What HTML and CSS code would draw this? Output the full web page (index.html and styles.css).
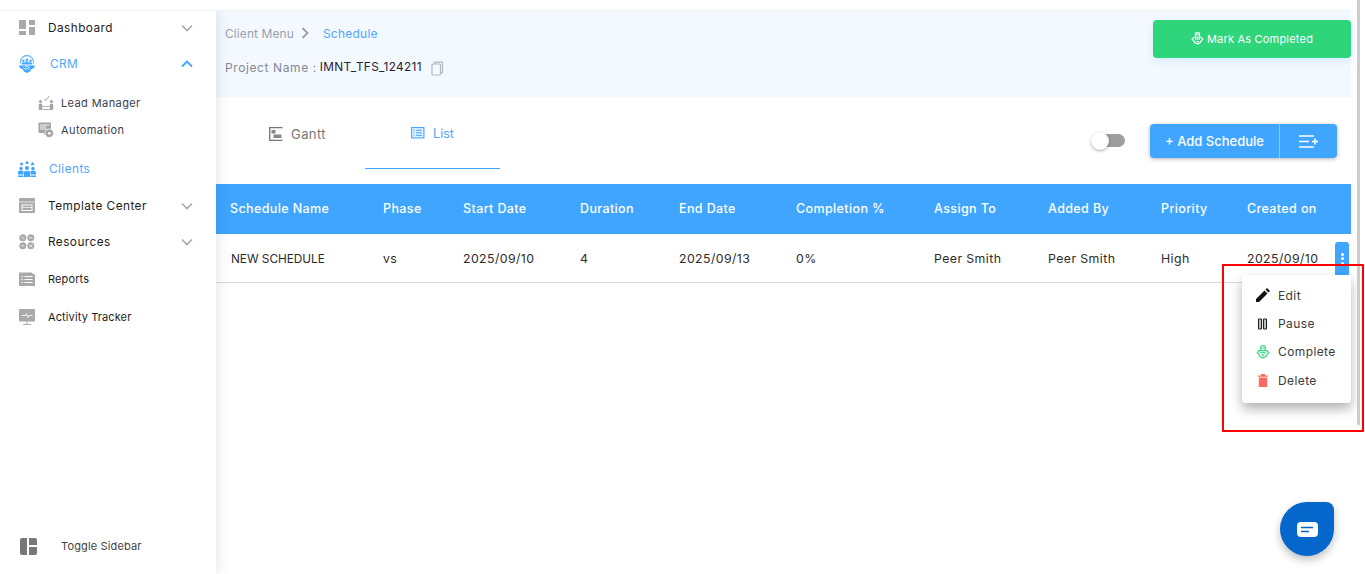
FILE: index.html
```html
<!DOCTYPE html>
<html lang="en">
<head>
<meta charset="utf-8">
<title>Schedule</title>
<link rel="stylesheet" href="styles.css">
</head>
<body>
<div class="topstrip"></div>
<div class="shell">
  <aside class="sidebar">
    <nav class="nav">
      <a class="item item-dashboard">
        <svg class="ico" viewBox="0 0 18 18"><g fill="#a9a9a9"><rect x="1" y="1" width="7" height="9"/><rect x="11" y="1" width="6" height="5"/><rect x="1" y="12" width="7" height="4"/><rect x="11" y="8" width="6" height="8"/></g></svg>
        <span class="label">Dashboard</span>
        <svg class="chev" viewBox="0 0 12 8"><path d="M1 1.500l5 5 5-5" fill="none" stroke="#a8a8a8" stroke-width="1.600"/></svg>
      </a>
      <a class="item item-crm active">
        <svg class="ico ico-crm" viewBox="0 0 20 20"><path d="M3.500 9.500V8a6.500 6.500 0 0 1 13 0v1.500" fill="none" stroke="#6dbbff" stroke-width="1.300"/><g fill="#3fa5ff"><circle cx="6.500" cy="6.800" r="1.200"/><circle cx="10" cy="5.800" r="1.200"/><circle cx="13.500" cy="6.800" r="1.200"/><path d="M4.800 10.500V9.300q.2-1 1.700-1t1.700 1v1.200zM8.300 10.500V8.300q.2-1 1.700-1t1.700 1v2.200zM11.800 10.500V9.300q.2-1 1.700-1t1.700 1v1.200z"/><path d="M2 11.500h16l-.8 2.500-2.700 1-1.500 2.500L10 19l-3-1.500L5.500 15l-2.700-1z"/></g><path d="M6 13.500l3 2 1.500-1 2 1.500M8 13l2-.7 3 1.700" stroke="#fff" stroke-width=".8" fill="none"/></svg>
        <span class="label label-crm">CRM</span>
        <svg class="chev" viewBox="0 0 12 8"><path d="M1 6.500l5-5 5 5" fill="none" stroke="#3fa5ff" stroke-width="1.800"/></svg>
      </a>
      <div class="submenu">
        <a class="subitem">
          <svg class="subico" viewBox="0 0 16 16"><g fill="#a4a4a4"><circle cx="2.500" cy="6.500" r="1.600"/><circle cx="13.500" cy="6.500" r="1.600"/><path d="M.8 15V10q0-1.500 1.700-1.500T4.200 10v5zM11.800 15V10q0-1.500 1.700-1.500t1.700 1.500v5z"/></g><path d="M4.500 11.500h3M4.500 14.500h7M8 11.500h3.500M6 4l2 1.500L11 1" fill="none" stroke="#a4a4a4" stroke-width=".9"/></svg>
          <span>Lead Manager</span>
        </a>
        <a class="subitem">
          <svg class="subico" viewBox="0 0 16 16"><rect x=".5" y="0.500" width="12.500" height="10.500" rx="1" fill="#a4a4a4"/><path d="M2 3h9.500M2 5h6M2 7h7M5 12.500h3" stroke="#fff" stroke-width=".9"/><path d="M6.500 11v1.500" stroke="#a4a4a4"/><circle cx="11.300" cy="11.300" r="4.300" fill="#a4a4a4" stroke="#fff" stroke-width=".8"/><circle cx="11.300" cy="11.300" r="1.400" fill="#fff"/></svg>
          <span>Automation</span>
        </a>
      </div>
      <a class="item item-clients active">
        <svg class="ico ico-clients" viewBox="0 0 18 18"><g fill="#3fa5ff"><path d="M3.500 1.800l.7 1.400 1.400.2-1 1 .2 1.400-1.300-.7-1.300.7.200-1.400-1-1 1.400-.2zM9 .5l.7 1.400 1.400.2-1 1 .2 1.400L9 3.800l-1.300.7.200-1.400-1-1 1.400-.2zM14.500 1.800l.7 1.400 1.400.2-1 1 .2 1.400-1.300-.7-1.300.7.200-1.400-1-1 1.400-.2z"/><circle cx="3" cy="8.500" r="1.700"/><circle cx="9" cy="8" r="2"/><circle cx="15" cy="8.500" r="1.700"/><path d="M0 14.500v-2.500q0-1.500 3-1.500t2.500 1v3zM12.500 14.500v-3q0-1 2.500-1t3 1.500v2.500zM6 17v-4.500q0-1.700 3-1.700t3 1.700V17z"/><rect x="0" y="15.500" width="5.500" height="1.500"/><rect x="12.500" y="15.500" width="5.500" height="1.500"/></g></svg>
        <span class="label">Clients</span>
      </a>
      <a class="item item-template">
        <svg class="ico" viewBox="0 0 18 18"><rect x="1" y="1" width="16" height="15" rx="1" fill="#a9a9a9"/><path d="M1 5h16" stroke="#fff" stroke-width=".7"/><rect x="4" y="8" width="10" height="5.500" fill="none" stroke="#fff"/><path d="M4 10.500h10" stroke="#fff" stroke-width=".7"/></svg>
        <span class="label">Template Center</span>
        <svg class="chev" viewBox="0 0 12 8"><path d="M1 1.500l5 5 5-5" fill="none" stroke="#a8a8a8" stroke-width="1.600"/></svg>
      </a>
      <a class="item item-resources">
        <svg class="ico" viewBox="0 0 18 18"><g fill="#a9a9a9"><circle cx="4.800" cy="4.800" r="3.500"/><circle cx="12.800" cy="4.800" r="3.500"/><circle cx="4.800" cy="12.800" r="3.500"/><circle cx="12.800" cy="12.800" r="3.500"/></g><path d="M3.300 3.300l3 3M11 4.800h3.500M3.300 12.800h3M11.300 11.300l3 3M14.300 11.300l-3 3" stroke="#fff" stroke-width=".8"/></svg>
        <span class="label">Resources</span>
        <svg class="chev" viewBox="0 0 12 8"><path d="M1 1.500l5 5 5-5" fill="none" stroke="#a8a8a8" stroke-width="1.600"/></svg>
      </a>
      <a class="item item-reports">
        <svg class="ico" viewBox="0 0 18 18"><path d="M1 2.500h12.500l3.500 2.500v11H1z" fill="#a9a9a9"/><path d="M3.500 6.500h1.500M6.500 6.500h8M3.500 9.500h1.500M6.500 9.500h8M3.500 12.500h1.500M6.500 12.500h8" stroke="#fff" stroke-width="1.100"/></svg>
        <span class="label">Reports</span>
      </a>
      <a class="item item-activity">
        <svg class="ico" viewBox="0 0 18 18"><rect x="1" y="1" width="16" height="12.500" rx="1" fill="#a9a9a9"/><path d="M3.500 7.500h4l1-2 1.500 4 1-2h3.500" fill="none" stroke="#fff" stroke-width=".9"/><path d="M9 13.500v2.500M5 16.500h8" stroke="#a9a9a9"/></svg>
        <span class="label">Activity Tracker</span>
      </a>
    </nav>
    <a class="toggle-side">
      <svg class="ico-toggle" viewBox="0 0 17 17"><path d="M2 0h5v17H2a2 2 0 0 1-2-2V2a2 2 0 0 1 2-2zM9 0h6a2 2 0 0 1 2 2v5H9zM9 9h8v6a2 2 0 0 1-2 2H9z" fill="#777"/></svg>
      <span>Toggle Sidebar</span>
    </a>
  </aside>
  <main class="main">
    <header class="head">
      <div class="head-text">
        <div class="crumbs">
          <span class="crumb">Client Menu</span>
          <svg class="crumb-sep" viewBox="0 0 8 12"><path d="M1.500 1l5 5-5 5" fill="none" stroke="#9aa0ab" stroke-width="1.800"/></svg>
          <span class="crumb-current">Schedule</span>
        </div>
        <div class="project">
          <span class="project-key">Project Name :</span>
          <span class="project-value">IMNT_TFS_124211</span>
          <svg class="copy" viewBox="0 0 13 15"><g fill="none" stroke="#b4b8c0" stroke-width="1.200"><rect x="1" y="3" width="8.500" height="11" rx="1" fill="#f4f9ff"/><path d="M3.500 3V1.200h8v10.500H9.500"/></g></svg>
        </div>
      </div>
      <button class="btn-complete">
        <svg class="mark-ico" viewBox="0 0 14 14"><use href="#team"/></svg>
        <span>Mark As Completed</span>
      </button>
    </header>
    <div class="toolbar">
      <div class="tabs">
        <div class="tab tab-gantt">
          <svg class="tab-ico" viewBox="0 0 14 14"><path d="M.7 0v14M0 .7h13.500M0 13.300h13.500" stroke="#777" stroke-width="1.300" fill="none"/><rect x="2.500" y="3" width="4" height="3.500" fill="#888"/><rect x="4.500" y="7.500" width="8" height="3.500" fill="#888"/></svg>
          <span>Gantt</span>
        </div>
        <div class="tab tab-active">
          <svg class="tab-ico" viewBox="0 0 14 14"><rect x=".6" y="1.600" width="12.300" height="10.300" fill="#e4f1ff" stroke="#3fa5ff" stroke-width="1.100"/><path d="M2.500 4.300h1.200M5 4.300h6M2.500 6.800h1.200M5 6.800h6M2.500 9.300h1.200M5 9.300h6" stroke="#3fa5ff"/></svg>
          <span>List</span>
        </div>
      </div>
      <div class="actions">
        <div class="switch"><span class="switch-knob"></span></div>
        <div class="btn-group">
          <button class="btn-add">+ Add Schedule</button>
          <button class="btn-bulk" aria-label="Add list">
            <svg viewBox="0 0 19 13"><path d="M0 1h15M0 6.500h10M0 12h15M13 6.500h6M16 3.500v6" stroke="#fff" stroke-width="1.600" fill="none"/></svg>
          </button>
        </div>
      </div>
    </div>
    <section class="table">
      <div class="row row-head">
        <div>Schedule Name</div><div>Phase</div><div>Start Date</div><div>Duration</div><div>End Date</div><div>Completion %</div><div>Assign To</div><div>Added By</div><div>Priority</div><div>Created on</div>
      </div>
      <div class="row row-body">
        <div class="cell-name">NEW SCHEDULE</div><div>vs</div><div>2025/09/10</div><div>4</div><div>2025/09/13</div><div>0%</div><div>Peer Smith</div><div>Peer Smith</div><div>High</div><div>2025/09/10</div>
        <button class="kebab" aria-label="Row menu"><i></i><i></i><i></i></button>
      </div>
    </section>
  </main>
</div>

<div class="menu">
  <div class="menu-item">
    <svg class="menu-ico" viewBox="0 0 14 14"><path d="M0 14v-3L8.500 2.500l3 3L3 14zM9.500 1.500L11 0l3 3-1.500 1.500z" fill="#111"/></svg>
    <span>Edit</span>
  </div>
  <div class="menu-item">
    <svg class="menu-ico" viewBox="0 0 14 14"><g fill="#c4c4c4" stroke="#222" stroke-width="1.100"><rect x="2.500" y="2" width="3" height="10" rx=".6"/><rect x="7.500" y="2" width="3" height="10" rx=".6"/></g></svg>
    <span>Pause</span>
  </div>
  <div class="menu-item">
    <svg class="menu-ico menu-ico-green" viewBox="0 0 14 14"><use href="#team"/></svg>
    <span>Complete</span>
  </div>
  <div class="menu-item">
    <svg class="menu-ico" viewBox="0 0 14 14"><path d="M2 2.500h10v1.200H2zM5 1h4v1.500H5zM2.800 4.500h8.400V14H2.800z" fill="#fb6c60"/></svg>
    <span>Delete</span>
  </div>
</div>

<div class="callout"></div>
<div class="scrollbar"></div>
<button class="chat" aria-label="Chat">
  <svg viewBox="0 0 21 15"><rect width="21" height="15" rx="4" fill="#fff"/><path d="M4 5.500h12M4 9.500h8" stroke="#0566cc" stroke-width="1.300"/></svg>
</button>

<svg class="defs" width="0" height="0">
  <symbol id="team" viewBox="0 0 14 14">
    <g fill="none" stroke="currentColor" stroke-width="1.200">
      <path d="M4.800 5V1.800q0-.9 1-.9h2.400q1 0 1 .9V5"/>
      <path d="M3 5.600h8l1.800 2.400-1.800 1.400-1 2L7 13l-3-1.600-1-2L1.200 8z"/>
    </g>
    <g fill="currentColor"><circle cx="6" cy="3" r=".8"/><circle cx="8" cy="3" r=".8"/><circle cx="5" cy="7.600" r=".9"/><circle cx="7" cy="7.600" r=".9"/><circle cx="9" cy="7.600" r=".9"/><path d="M5 9.600h4l-2 1.800z"/></g>
  </symbol>
</svg>
</body>
</html>
```

FILE: styles.css
```css
* { box-sizing: border-box; }
html, body { height: 100%; }
body {
  margin: 0;
  overflow: hidden;
  background: #fff;
  font-family: "Inter", "Open Sans", sans-serif;
  font-size: 12px;
  color: #2b2b2b;
}
button { font: inherit; border: 0; padding: 0; cursor: pointer; }
a { color: inherit; text-decoration: none; }
svg { display: block; flex: none; }
.defs { position: absolute; }

.topstrip { height: 11px; width: 1351px; border-bottom: 1px solid #eef1f5; }
.shell { display: flex; height: 563px; }

.sidebar {
  width: 216px;
  flex: none;
  display: flex;
  flex-direction: column;
  justify-content: space-between;
  background: #fff;
  box-shadow: 0 0 14px rgba(0, 0, 0, .13);
  position: relative;
  z-index: 2;
  clip-path: inset(0 -30px 0 0);
}
.nav { display: flex; flex-direction: column; }
.item {
  display: flex;
  align-items: center;
  height: 36px;
  padding-left: 18px;
  padding-right: 23px;
  color: #1c1c1c;
  font-size: 11.800px;
  letter-spacing: .45px;
}
.item-dashboard { margin-top: -1px; }
.item.active { color: #4ea6ff; }
.ico { width: 18px; height: 18px; margin-right: 12px; }
.ico-crm { width: 20px; height: 20px; margin-left: -1px; margin-right: 13px; }
.ico-clients { margin-right: 13px; }
.label { flex: 1; white-space: nowrap; }
.chev { width: 12px; height: 8px; }
.submenu { display: flex; flex-direction: column; padding-top: 7px; padding-bottom: 8px; }
.subitem {
  display: flex;
  align-items: center;
  height: 27px;
  padding-left: 38px;
  gap: 7px;
  font-size: 11px;
  letter-spacing: .4px;
  color: #3a4150;
}
.subico { width: 16px; height: 16px; }
.item-template { margin-top: 1px; }
.item-reports { margin-top: 1px; }
.item-activity { margin-top: 2px; }
.item-reports, .item-activity { font-size: 11px; letter-spacing: .12px; }
.toggle-side {
  display: flex;
  align-items: center;
  height: 38px;
  margin-bottom: 9px;
  padding-left: 20px;
  gap: 24px;
  font-size: 11px;
  letter-spacing: .15px;
  color: #444;
}
.ico-toggle { width: 17px; height: 17px; }

.main { width: 1135px; flex: none; display: flex; flex-direction: column; }
.head {
  height: 86px;
  background: #f4f9ff;
  display: flex;
  justify-content: space-between;
  align-items: flex-start;
  padding: 9px 0 0 9px;
}
.head-text { display: flex; flex-direction: column; gap: 18px; padding-top: 5px; }
.crumbs { display: flex; align-items: center; height: 16px; font-size: 12px; letter-spacing: .08px; }
.crumb { color: #9aa0ab; }
.crumb-sep { width: 8px; height: 12px; margin: 0 14px 0 7px; }
.crumb-current { color: #4ea6ff; letter-spacing: .25px; }
.project { display: flex; align-items: center; height: 16px; font-size: 12px; }
.project-key { color: #858a94; margin-right: 3px; letter-spacing: .6px; }
.project-value { color: #1f2430; margin-right: 9px; font-size: 11.800px; letter-spacing: .35px; }
.copy { width: 13px; height: 15px; margin-top: 2px; }
.btn-complete {
  width: 198px;
  height: 38px;
  display: flex;
  align-items: center;
  justify-content: center;
  gap: 3px;
  background: #2ed57a;
  color: #fff;
  border-radius: 4px;
  font-size: 11px;
  letter-spacing: .2px;
  padding-bottom: 1px;
  box-shadow: 0 3px 8px rgba(63, 165, 255, .18);
}
.mark-ico { width: 13px; height: 13px; color: #fff; }

.toolbar {
  height: 87px;
  display: flex;
  justify-content: space-between;
  padding-left: 14px;
  padding-right: 14px;
}
.tabs { display: flex; height: 72px; }
.tab {
  width: 135px;
  display: flex;
  align-items: center;
  justify-content: center;
  gap: 8px;
  padding-top: 1px;
  font-size: 12.500px;
  color: #777;
}
.tab-gantt { font-size: 13px; letter-spacing: .38px; }
.tab-ico { width: 14px; height: 14px; }
.tab-active { color: #4ea6ff; border-bottom: 1px solid #3fa5ff; }
.actions { display: flex; align-items: flex-start; padding-top: 27px; }
.switch {
  width: 32px;
  height: 13px;
  margin: 10px 25px 0 0;
  background: #9e9e9e;
  border-radius: 7px;
  display: flex;
  align-items: center;
}
.switch-knob {
  width: 18px;
  height: 18px;
  margin-left: -2px;
  border-radius: 50%;
  background: #fff;
  box-shadow: 0 1px 3px rgba(0, 0, 0, .35);
}
.btn-group {
  display: flex;
  height: 34px;
  border-radius: 4px;
  background: #3fa5ff;
  box-shadow: 0 1px 4px rgba(0, 0, 0, .3);
}
.btn-add {
  width: 130px;
  background: none;
  color: #fff;
  font-size: 13px;
  font-weight: 500;
  padding-bottom: 1px;
  border-right: 1px solid #8cc8ff;
}
.btn-bulk {
  width: 57px;
  background: none;
  display: flex;
  align-items: center;
  justify-content: center;
}
.btn-bulk svg { width: 19px; height: 13px; }

.table { display: flex; flex-direction: column; }
.row {
  display: grid;
  grid-template-columns: 153px 80px 117px 99px 117px 138px 114px 113px 86px 1fr;
  align-items: center;
  padding-left: 14px;
}
.row-head {
  height: 50px;
  padding-bottom: 1px;
  background: #3fa5ff;
  color: #fff;
  font-size: 12.500px;
  font-weight: 500;
  letter-spacing: .38px;
}
.row-body {
  height: 49px;
  border-bottom: 1px solid #d9d9d9;
  font-size: 12.300px;
  letter-spacing: .42px;
  color: #2b2b2b;
  position: relative;
}
.cell-name { letter-spacing: -.02px; padding-left: 1px; padding-top: 1px; font-size: 11.800px; }
.kebab {
  position: absolute;
  left: 1119px;
  top: 8px;
  width: 14px;
  height: 33px;
  background: #3fa5ff;
  border-radius: 3px 3px 0 0;
  display: flex;
  flex-direction: column;
  align-items: center;
  justify-content: center;
  gap: 1.500px;
}
.kebab i { width: 3px; height: 3px; background: #fff; border-radius: 50%; }

.menu {
  position: absolute;
  left: 1242px;
  top: 275px;
  width: 109px;
  height: 128px;
  padding-top: 6px;
  background: #fff;
  border-radius: 4px;
  box-shadow: 0 6px 12px rgba(0, 0, 0, .3);
  z-index: 3;
  display: flex;
  flex-direction: column;
}
.menu-item {
  display: flex;
  align-items: center;
  height: 28.400px;
  padding-left: 14px;
  gap: 8px;
  font-size: 12px;
  letter-spacing: .4px;
  color: #3b3b3b;
}
.menu-ico { width: 14px; height: 14px; }
.menu-ico-green { color: #35d67f; }

.callout {
  position: absolute;
  left: 1222px;
  top: 264px;
  width: 142px;
  height: 168px;
  border: 2px solid #f00;
  z-index: 4;
  pointer-events: none;
}
.scrollbar {
  position: absolute;
  left: 1357px;
  top: 0;
  width: 3px;
  height: 425px;
  background: #cccccc;
  z-index: 3;
}
.chat {
  position: absolute;
  left: 1280px;
  top: 502px;
  width: 54px;
  height: 54px;
  background: #0566cc;
  border-radius: 50% 8px 50% 50%;
  box-shadow: 0 4px 8px rgba(0, 0, 0, .25);
  display: flex;
  align-items: center;
  justify-content: center;
  z-index: 3;
}
.chat svg { width: 21px; height: 15px; }
```
